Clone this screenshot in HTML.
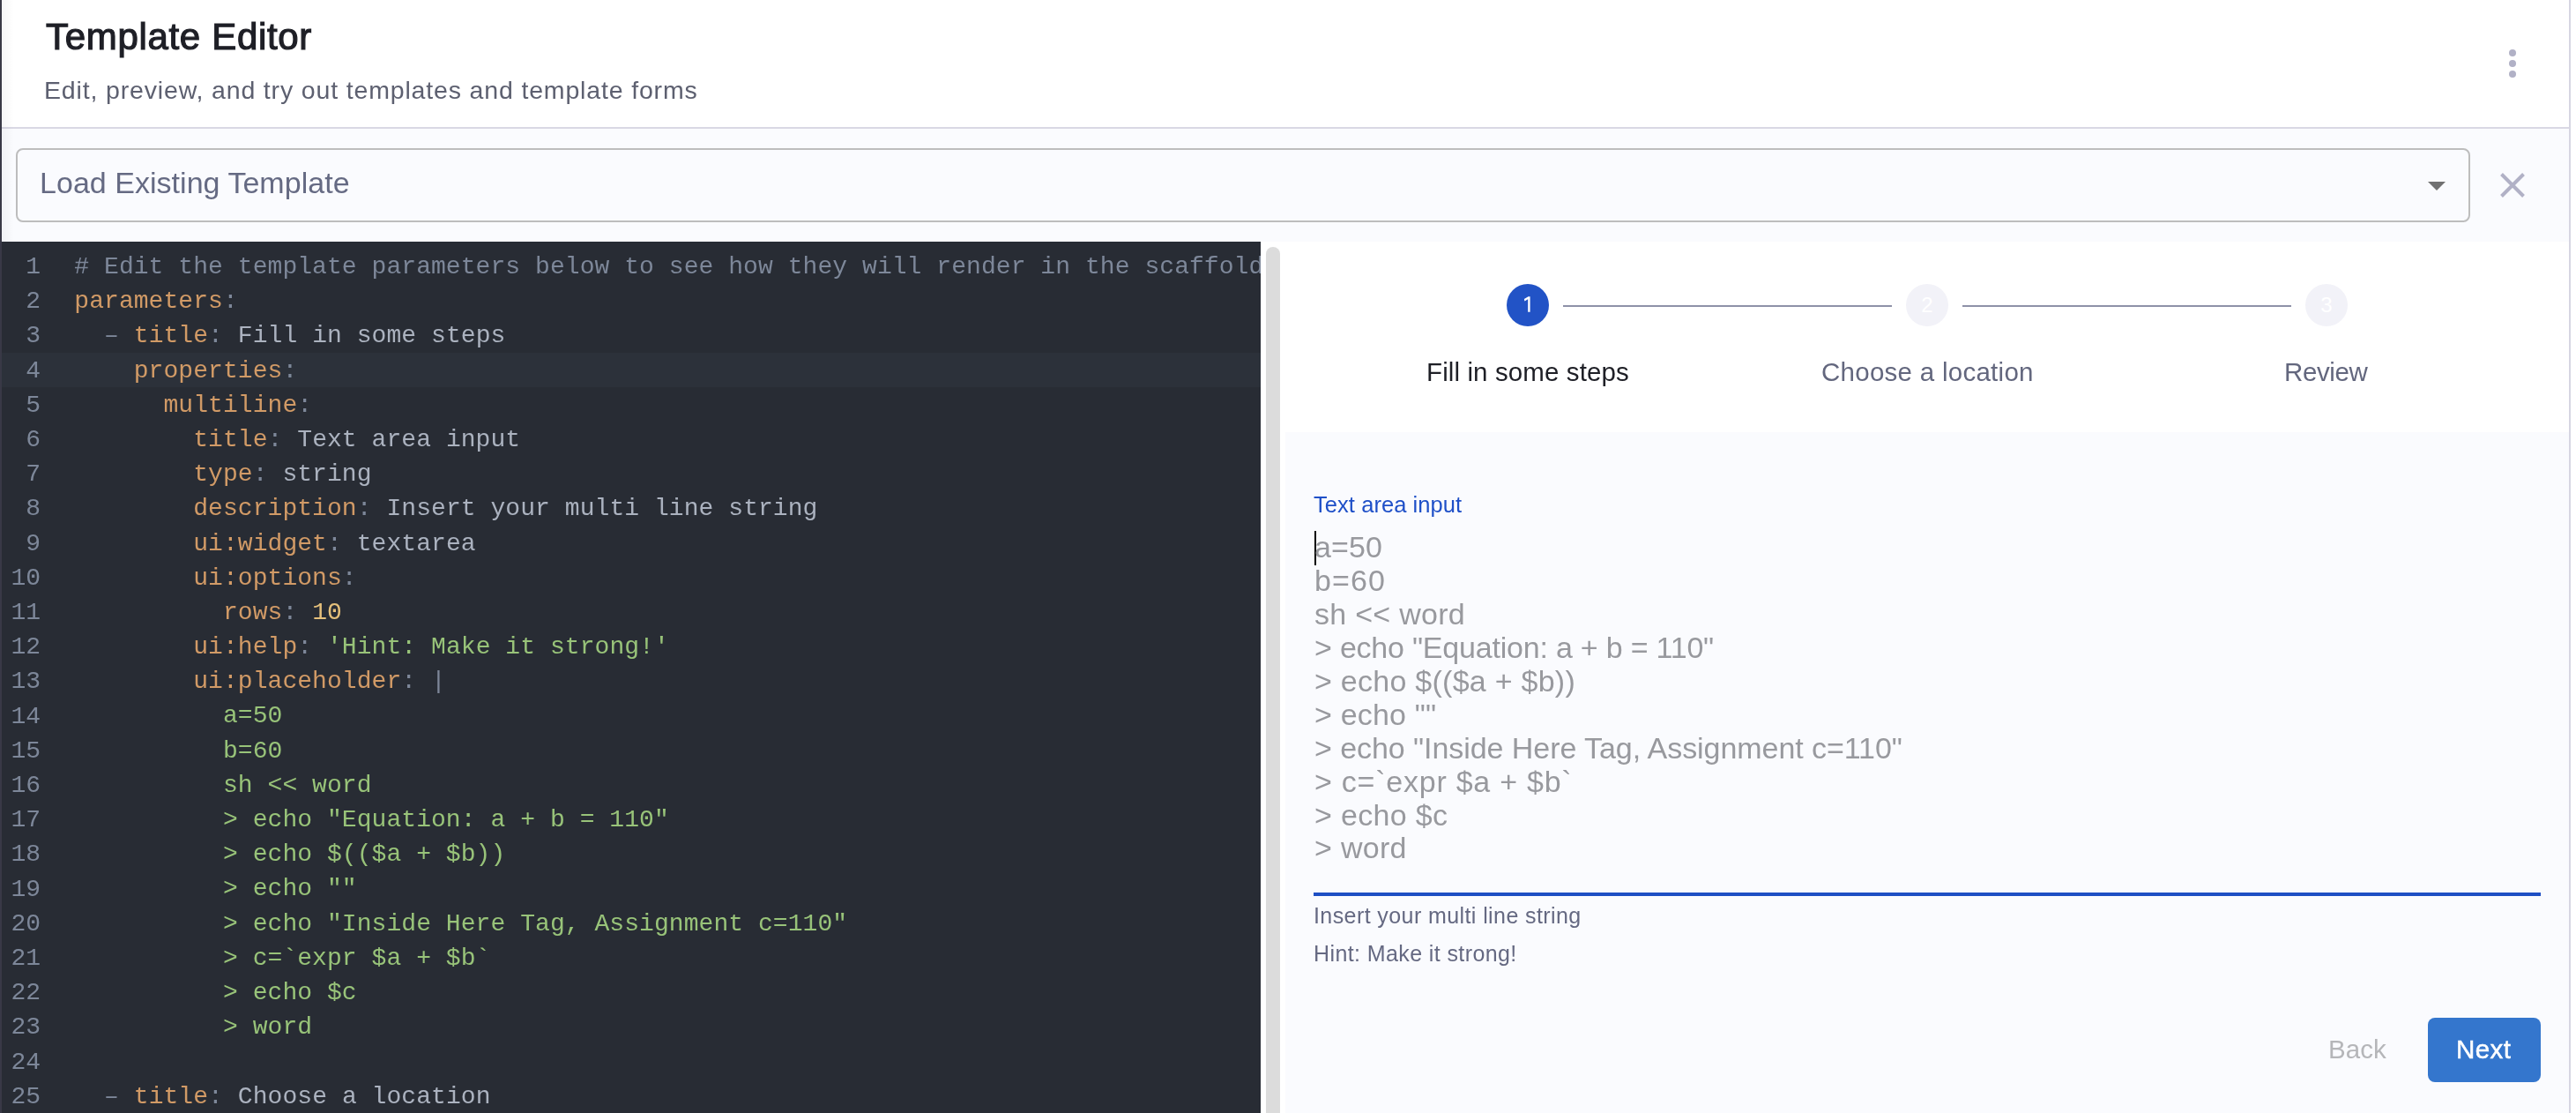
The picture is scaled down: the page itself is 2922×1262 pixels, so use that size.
<!DOCTYPE html>
<html><head><meta charset="utf-8">
<style>
html,body{margin:0;padding:0;}
body{width:2922px;height:1262px;overflow:hidden;position:relative;background:#fff;font-family:"Liberation Sans",sans-serif;-webkit-font-smoothing:antialiased;}
.abs{position:absolute;}
.t{position:absolute;white-space:pre;line-height:1;will-change:transform;}
#strip{left:0;top:0;width:2px;height:1262px;background:#393946;}
#shadow{left:2px;top:0;width:14px;height:274px;background:linear-gradient(to right,rgba(0,0,0,0.035),rgba(0,0,0,0));}
#rline{left:2914px;top:0;width:2px;height:1262px;background:#d7d6e2;}
#header{left:2px;top:0;width:2912px;height:144px;background:#fff;}
#hborder{left:2px;top:144px;width:2912px;height:2px;background:#d9d8e4;}
#toolbar{left:2px;top:146px;width:2912px;height:128px;background:#fafbfe;}
#select{left:18px;top:168px;width:2780px;height:80px;border:2px solid #bdbdbd;border-radius:8px;box-sizing:content-box;}
#editor{left:2px;top:274px;width:1428px;height:988px;background:#282c34;overflow:hidden;will-change:transform;}
#activeline{position:absolute;left:0;top:125.8px;width:1428px;height:39.2px;background:#2c313a;}
#gutter{position:absolute;left:0;top:9px;width:44px;text-align:right;font-family:"Liberation Mono",monospace;font-size:28px;line-height:39.2px;color:#7d8799;}
#code{position:absolute;left:82.3px;top:9px;font-family:"Liberation Mono",monospace;font-size:28px;line-height:39.2px;color:#abb2bf;white-space:pre;letter-spacing:0.06px;}
.ln{height:39.2px;}
.k{color:#d19a66;} .p{color:#7d8799;} .s{color:#98c379;} .n{color:#e5c07b;} .c{color:#7d8799;}
#rpanel{left:1430px;top:274px;width:1484px;height:988px;background:#fff;}
#handle{left:1436px;top:280px;width:16px;height:990px;background:#dcdcdc;border-radius:8px;}
#form{left:1458px;top:490px;width:1456px;height:772px;background:#fafbfe;}
.circle{position:absolute;width:48px;height:48px;border-radius:50%;top:322px;text-align:center;line-height:48px;font-size:24px;color:#fff;}
.conn{position:absolute;top:346px;height:2px;background:#8e91a8;}
</style></head>
<body>
<div id="header" class="abs"></div>
<div id="hborder" class="abs"></div>
<div id="toolbar" class="abs"></div>
<div id="shadow" class="abs"></div>
<div id="strip" class="abs"></div>
<div id="rline" class="abs"></div>
<div id="select" class="abs"></div>
<div id="editor" class="abs"><div id="activeline"></div><div id="gutter"><div class="gn">1</div><div class="gn">2</div><div class="gn">3</div><div class="gn">4</div><div class="gn">5</div><div class="gn">6</div><div class="gn">7</div><div class="gn">8</div><div class="gn">9</div><div class="gn">10</div><div class="gn">11</div><div class="gn">12</div><div class="gn">13</div><div class="gn">14</div><div class="gn">15</div><div class="gn">16</div><div class="gn">17</div><div class="gn">18</div><div class="gn">19</div><div class="gn">20</div><div class="gn">21</div><div class="gn">22</div><div class="gn">23</div><div class="gn">24</div><div class="gn">25</div></div><div id="code"><div class="ln"><span class="c"># Edit the template parameters below to see how they will render in the scaffolder form UI.</span></div><div class="ln"><span class="k">parameters</span><span class="p">:</span></div><div class="ln">  <span class="p">&#8211;</span> <span class="k">title</span><span class="p">:</span> Fill in some steps</div><div class="ln">    <span class="k">properties</span><span class="p">:</span></div><div class="ln">      <span class="k">multiline</span><span class="p">:</span></div><div class="ln">        <span class="k">title</span><span class="p">:</span> Text area input</div><div class="ln">        <span class="k">type</span><span class="p">:</span> string</div><div class="ln">        <span class="k">description</span><span class="p">:</span> Insert your multi line string</div><div class="ln">        <span class="k">ui:widget</span><span class="p">:</span> textarea</div><div class="ln">        <span class="k">ui:options</span><span class="p">:</span></div><div class="ln">          <span class="k">rows</span><span class="p">:</span> <span class="n">10</span></div><div class="ln">        <span class="k">ui:help</span><span class="p">:</span> <span class="s">'Hint: Make it strong!'</span></div><div class="ln">        <span class="k">ui:placeholder</span><span class="p">: |</span></div><div class="ln"><span class="s">          a=50</span></div><div class="ln"><span class="s">          b=60</span></div><div class="ln"><span class="s">          sh &lt;&lt; word</span></div><div class="ln"><span class="s">          &gt; echo "Equation: a + b = 110"</span></div><div class="ln"><span class="s">          &gt; echo $(($a + $b))</span></div><div class="ln"><span class="s">          &gt; echo ""</span></div><div class="ln"><span class="s">          &gt; echo "Inside Here Tag, Assignment c=110"</span></div><div class="ln"><span class="s">          &gt; c=`expr $a + $b`</span></div><div class="ln"><span class="s">          &gt; echo $c</span></div><div class="ln"><span class="s">          &gt; word</span></div><div class="ln"></div><div class="ln">  <span class="p">&#8211;</span> <span class="k">title</span><span class="p">:</span> Choose a location</div></div></div>
<div id="rpanel" class="abs"></div>
<div id="handle" class="abs"></div>
<div id="form" class="abs"></div>

<div class="t" id="title" style="left:51.5px;top:21px;font-size:42px;letter-spacing:0.68px;-webkit-text-stroke:1.2px #1e1f26;color:#1e1f26;">Template Editor</div>
<div class="t" id="subtitle" style="left:49.7px;top:87.8px;font-size:28.5px;letter-spacing:0.84px;color:#5d6070;">Edit, preview, and try out templates and template forms</div>
<div class="t" id="selecttext" style="left:45.3px;top:189.8px;font-size:34px;letter-spacing:0.03px;color:#656a83;">Load Existing Template</div>

<!-- kebab -->
<div class="abs" style="left:2846px;top:56px;width:8px;height:8px;border-radius:50%;background:#b1b1c6"></div>
<div class="abs" style="left:2846px;top:68px;width:8px;height:8px;border-radius:50%;background:#b1b1c6"></div>
<div class="abs" style="left:2846px;top:80px;width:8px;height:8px;border-radius:50%;background:#b1b1c6"></div>
<!-- dropdown arrow -->
<svg class="abs" style="left:2754px;top:206px" width="20" height="10" viewBox="0 0 20 10"><path d="M0 0H20L10 10Z" fill="#717171"/></svg>
<!-- close X -->
<svg class="abs" style="left:2836px;top:196px" width="28" height="28" viewBox="0 0 28 28"><path d="M1.5 1.5L26.5 26.5M26.5 1.5L1.5 26.5" stroke="#b1b1c6" stroke-width="4"/></svg>

<!-- stepper -->
<div class="circle" style="left:1709px;background:#2253c6;"></div>
<svg class="abs" style="left:1720px;top:330px" width="25" height="30" viewBox="0 0 25 30"><path d="M15.6 6.3V23.8H13.2V9.3L9.4 11.5L8.9 9.1L13.6 6.3Z" fill="#fff"/></svg>
<div class="circle" style="left:2162px;background:#f2f2f8;">2</div>
<div class="circle" style="left:2615px;background:#f2f2f8;">3</div>
<div class="conn" style="left:1773px;width:373px;"></div>
<div class="conn" style="left:2226px;width:373px;"></div>
<div class="t" style="left:1617.8px;top:406.9px;font-size:29.5px;letter-spacing:0.11px;color:#1e1f26;">Fill in some steps</div>
<div class="t" style="left:2065.6px;top:407px;font-size:29.5px;letter-spacing:0.27px;color:#63677e;">Choose a location</div>
<div class="t" style="left:2590.6px;top:407px;font-size:29.5px;letter-spacing:-0.38px;color:#63677e;">Review</div>

<!-- form -->
<div class="t" style="left:1490px;top:560.2px;font-size:25.5px;letter-spacing:0.06px;color:#1f50c8;">Text area input</div>
<div class="abs" style="left:1491px;top:602px;width:2px;height:39px;background:#000;"></div>
<div class="abs" style="will-change:transform;left:1490.6px;top:602px;font-size:34px;line-height:37.95px;color:#98999e;white-space:pre;"><div style="height:37.95px;letter-spacing:0.13px">a=50</div><div style="height:37.95px;letter-spacing:1.1px">b=60</div><div style="height:37.95px;letter-spacing:0.28px">sh &lt;&lt; word</div><div style="height:37.95px;letter-spacing:-0.21px">&gt; echo "Equation: a + b = 110"</div><div style="height:37.95px;letter-spacing:0.26px">&gt; echo $(($a + $b))</div><div style="height:37.95px;letter-spacing:0.19px">&gt; echo ""</div><div style="height:37.95px;letter-spacing:-0.06px">&gt; echo "Inside Here Tag, Assignment c=110"</div><div style="height:37.95px;letter-spacing:0.76px">&gt; c=`expr $a + $b`</div><div style="height:37.95px;letter-spacing:0.34px">&gt; echo $c</div><div style="height:37.95px;letter-spacing:0.3px">&gt; word</div></div>
<div class="abs" style="left:1490px;top:1012px;width:1392px;height:4px;background:#1e4fc4;"></div>
<div class="t" style="left:1489.6px;top:1026.2px;font-size:25px;letter-spacing:0.41px;color:#656982;">Insert your multi line string</div>
<div class="t" style="left:1489.6px;top:1069px;font-size:25px;letter-spacing:0.4px;color:#656982;">Hint: Make it strong!</div>

<div class="t" style="left:2640.9px;top:1175px;font-size:29.5px;letter-spacing:0.03px;color:#b5b6b9;">Back</div>
<div class="abs" style="left:2754px;top:1154px;width:128px;height:73px;border-radius:8px;background:#3476cd;"></div>
<div class="t" style="left:2785.7px;top:1175.1px;font-size:29.5px;letter-spacing:0.4px;-webkit-text-stroke:0.5px #fff;color:#fff;">Next</div>
</body></html>
